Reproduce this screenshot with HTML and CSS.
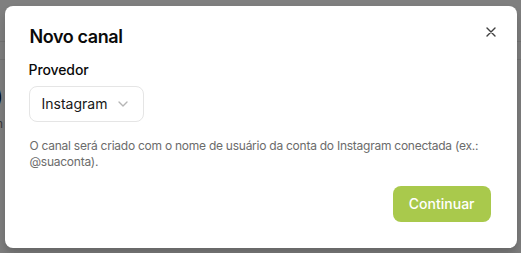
FILE: index.html
```html
<!DOCTYPE html>
<html lang="pt-BR">
  <head>
    <meta charset="UTF-8" />
    <meta name="viewport" content="width=device-width, initial-scale=1.0" />
    <title>Novo canal</title>
    <link rel="stylesheet" href="styles.css">
  </head>
  <body>
    <!-- page behind the dialog -->
    <div class="page">
      <div class="page-header"></div>
      <div class="page-toolbar"></div>
      <div class="page-body">
        <h2>Canais (0)</h2>
        <p>Conecte uma conta do Instagram</p>
      </div>
    </div>

    <div class="overlay">
      <div class="dialog" role="dialog" aria-labelledby="dialog-title">
        <button class="dialog-close" aria-label="Fechar">
          <svg width="10" height="10" viewBox="0 0 10 10" fill="none" stroke="currentColor" stroke-width="1.4" stroke-linecap="round">
            <path d="M1 1l8 8M9 1L1 9" />
          </svg>
        </button>

        <h1 id="dialog-title" class="dialog-title">Novo canal</h1>

        <div class="field">
          <label class="field-label">Provedor</label>
          <div class="select">
            <span>Instagram</span>
            <svg width="16" height="16" viewBox="0 0 24 24" fill="none" stroke="currentColor" stroke-width="2" stroke-linecap="round" stroke-linejoin="round">
              <path d="m6 9 6 6 6-6" />
            </svg>
          </div>
        </div>

        <p class="dialog-hint">
          O canal será criado com o nome de usuário da conta do Instagram conectada (ex.: @suaconta).
        </p>

        <div class="dialog-footer">
          <button class="btn-primary">Continuar</button>
        </div>
      </div>
    </div>
  </body>
</html>
```

FILE: styles.css
```css
* {
  box-sizing: border-box;
}

body {
  font-family: "Inter", "Noto Sans", sans-serif;
  margin: 0;
  padding: 0;
  color: #0a0a0a;
  background: #fff;
  width: 521px;
  height: 253px;
  overflow: hidden;
  position: relative;
}

/* background page */
.page {
  height: 100%;
}

.page-header {
  height: 42px;
  border-bottom: 1px solid #e8e8e8;
}

.page-toolbar {
  height: 18px;
  border-bottom: 1px solid #e8e8e8;
}

.page-body {
  width: 3px;
  display: flex;
  flex-direction: column;
  align-items: flex-end;
  white-space: nowrap;
}

.page-body h2 {
  margin: 24px 0 0 0;
  font-size: 22px;
  line-height: 26px;
  font-weight: 600;
}

.page-body p {
  margin: 6px 0 0 0;
  font-size: 12px;
  color: #737373;
}

/* dialog */
.overlay {
  position: absolute;
  inset: 0;
  background: rgba(0, 0, 0, 0.5);
  display: flex;
  align-items: center;
  justify-content: center;
}

.dialog {
  position: relative;
  width: 512px;
  background: #fff;
  border-radius: 8px;
  padding: 20px 24px 26px 24px;
  box-shadow: 0 10px 15px rgba(0, 0, 0, 0.1), 0 4px 6px rgba(0, 0, 0, 0.1);
}

.dialog-close {
  position: absolute;
  top: 18px;
  right: 18px;
  width: 16px;
  height: 16px;
  padding: 0;
  border: none;
  background: none;
  color: #3f3f3f;
  display: flex;
  align-items: center;
  justify-content: center;
  cursor: pointer;
}

.dialog-title {
  margin: 0;
  font-size: 18px;
  line-height: 22px;
  font-weight: 600;
  letter-spacing: -0.4px;
  padding-left: 1px;
}

.field {
  margin-top: 12px;
  display: flex;
  flex-direction: column;
  align-items: flex-start;
  gap: 6px;
}

.field-label {
  font-size: 14px;
  line-height: 20px;
  font-weight: 500;
  letter-spacing: -0.1px;
}

.select {
  height: 36px;
  display: flex;
  align-items: center;
  gap: 8px;
  padding: 0 12px;
  border: 1px solid #e5e5e5;
  border-radius: 8px;
  font-size: 14px;
  color: #171717;
}

.select svg {
  color: #b5b5b5;
}

.dialog-hint {
  margin: 16px 0 0 0;
  font-size: 12px;
  line-height: 16px;
  color: #6b6b6b;
  letter-spacing: -0.25px;
  padding-left: 1px;
}

.dialog-footer {
  margin-top: 16px;
  display: flex;
  justify-content: flex-end;
}

.btn-primary {
  height: 36px;
  padding: 0 16px;
  margin-right: 2px;
  border: none;
  border-radius: 8px;
  background: #a9c94c;
  color: #fff;
  font-family: inherit;
  font-size: 14px;
  font-weight: 500;
  cursor: pointer;
}
```
